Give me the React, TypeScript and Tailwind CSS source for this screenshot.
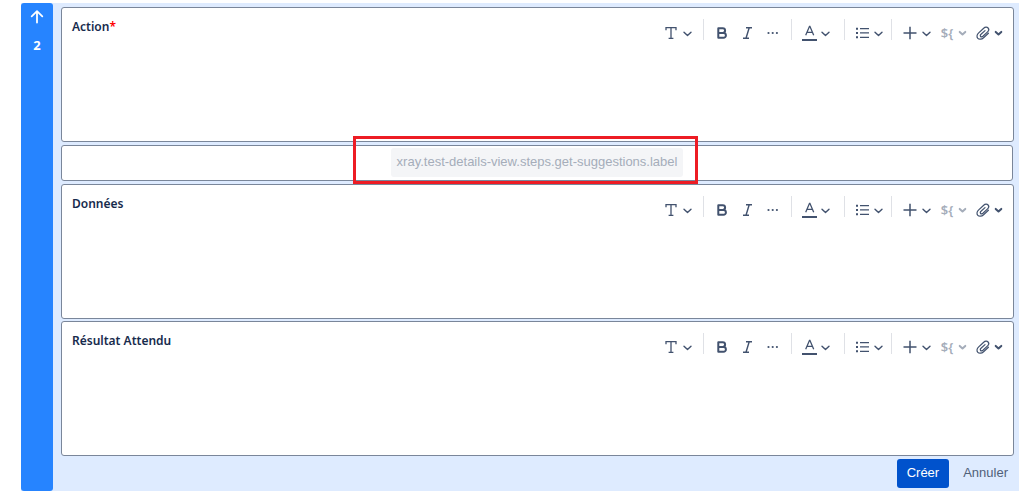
import type { ReactNode } from 'react';

function Chevron({ bold = false }: { bold?: boolean }) {
  return (
    <svg width="9" height="16" viewBox="0 0 9 16" fill="none" stroke="currentColor" strokeWidth={bold ? 2 : 1.4} strokeLinecap="round" strokeLinejoin="round" aria-hidden="true">
      <path d={bold ? 'M1.7 6.9 4.5 9.5 7.3 6.9' : 'M1 7.2 4.5 10.6 8 7.2'} />
    </svg>
  );
}

function Icon({ children, fill = false }: { children: ReactNode; fill?: boolean }) {
  return (
    <svg
      width="16"
      height="16"
      viewBox="0 0 16 16"
      fill={fill ? 'currentColor' : 'none'}
      stroke={fill ? 'none' : 'currentColor'}
      strokeWidth="1.4"
      aria-hidden="true"
    >
      {children}
    </svg>
  );
}

function ToolButton({ label, menu, boldMenu, disabled, children }: { label: string; menu?: boolean; boldMenu?: boolean; disabled?: boolean; children: ReactNode }) {
  return (
    <button type="button" aria-label={label} disabled={disabled} className="flex items-center gap-[3px] text-[#42526e] disabled:text-[#a5adba]">
      {children}
      {menu && <Chevron bold={boldMenu} />}
    </button>
  );
}

function Divider() {
  return <span className="h-[21px] w-px self-start bg-[#dfe1e6]" />;
}

function Toolbar() {
  return (
    <div role="toolbar" className="flex h-7 items-center">
      <ToolButton label="Style de texte" menu>
        <Icon>
          <path d="M2 5.2V2.7h10v2.5M7 2.7v10.6M4.6 13.3h4.8" strokeWidth="1.3" />
        </Icon>
      </ToolButton>
      <div className="ml-[11px] mr-2.5 flex self-stretch"><Divider /></div>
      <div className="flex gap-2.5">
        <ToolButton label="Gras">
          <Icon>
            <path d="M4.3 3.2h4.4a2.3 2.3 0 0 1 0 4.8H4.3zM4.3 8h5.2a2.4 2.4 0 0 1 0 4.8H4.3z" strokeWidth="2" strokeLinejoin="round" />
          </Icon>
        </ToolButton>
        <ToolButton label="Italique">
          <Icon>
            <path d="M6 2.7h6M3 13.3h6M9.2 2.7 6 13.3" />
          </Icon>
        </ToolButton>
        <ToolButton label="Plus de mise en forme">
          <Icon fill>
            <circle cx="2.5" cy="8" r="1.1" />
            <circle cx="6.7" cy="8" r="1.1" />
            <circle cx="10.9" cy="8" r="1.1" />
          </Icon>
        </ToolButton>
      </div>
      <div className="ml-[9px] mr-2.5 flex self-stretch"><Divider /></div>
      <ToolButton label="Couleur du texte" menu>
        <Icon>
          <path d="M3.7 10.3 7.5 1.3h.4l3.8 9M5 7.3h5.4" strokeWidth="1.3" />
          <path d="M0 15h15" strokeWidth="2" />
        </Icon>
      </ToolButton>
      <div className="ml-3.5 mr-2.5 flex self-stretch"><Divider /></div>
      <ToolButton label="Listes" menu>
        <Icon fill>
          <path d="M5 3h9v1.3H5zM5 7.3h9v1.3H5zM5 11.7h9V13H5zM1 2.7h2v2H1zM1 7h2v2H1zM1 11.3h2v2H1z" />
        </Icon>
      </ToolButton>
      <div className="ml-2 mr-[11px] flex self-stretch"><Divider /></div>
      <div className="flex gap-2">
        <ToolButton label="Insérer" menu>
          <Icon>
            <path d="M.5 8h13M7 1.7v12.6" strokeWidth="1.5" />
          </Icon>
        </ToolButton>
        <ToolButton label="Paramètres" menu boldMenu disabled>
          <span className="w-4 text-center font-['Noto_Sans','Open_Sans',sans-serif] text-[13px] leading-4 font-semibold">{'${'}</span>
        </ToolButton>
        <ToolButton label="Pièces jointes" menu boldMenu>
          <Icon>
            <path d="m13.4 8.2-4.8 4.5c-2 1.9-4.600 1.900-5.800.6-1.300-1.300-1.100-3.600.9-5.400l5-4.700c1.400-1.300 3.400-1.300 4.400-.2 1 1.100.8 2.700-.5 3.900L7.900 11.300c-.8.7-1.800.8-2.300.2-.6-.6-.4-1.500.4-2.200l4-3.700" strokeWidth="1.2" strokeLinecap="round" />
          </Icon>
        </ToolButton>
      </div>
    </div>
  );
}

function Field({ id, label, required }: { id: string; label: string; required?: boolean }) {
  return (
    <section className="flex h-[135px] flex-col rounded-[3px] border border-[#7a869a] bg-white">
      <div className="flex items-start justify-between pt-[11px] pr-2.5 pl-2.5">
        <label htmlFor={id} className="-mt-px font-['Noto_Sans','Open_Sans',sans-serif] text-[12px] leading-[18px] font-semibold text-[#172b4d]">
          {label}
          {required && <span className="text-[#ff0000]">*</span>}
        </label>
        <Toolbar />
      </div>
      <textarea id={id} required={required} className="min-h-0 flex-1 resize-none bg-transparent px-2.5 text-[13px] text-[#172b4d] outline-none" />
    </section>
  );
}

export default function App() {
  return (
    <main className="bg-white pt-[3px] pb-1.5 pl-[21px] font-['Liberation_Sans',Arial,sans-serif] text-[13px]">
      <div className="flex bg-[#deebff]">
        <aside className="flex w-8 shrink-0 flex-col items-center rounded-[3px] bg-[#2684ff] pt-1.5 text-white">
          <button type="button" aria-label="Déplacer vers le haut">
            <svg width="16" height="16" viewBox="0 0 16 16" fill="none" stroke="currentColor" strokeWidth="1.8" strokeLinecap="round" strokeLinejoin="round" aria-hidden="true">
              <path d="M8 13.5V2.5M2.7 7.3 8 2.2l5.3 5.1" />
            </svg>
          </button>
          <span className="mt-[11px] font-['Noto_Sans','Open_Sans',sans-serif] leading-[18px] font-bold">2</span>
        </aside>
        <form className="flex min-w-0 flex-1 flex-col gap-[3px] pt-1 pr-[5px] pb-[3px] pl-2">
          <Field id="action" label="Action" required />
          <div className="mr-px flex h-9 items-start justify-center rounded-[3px] border border-[#7a869a] bg-white pt-0.5">
            <div className="relative">
              <button type="button" disabled className="block rounded-[3px] bg-[#f4f5f7] px-1.5 pt-[3px] pb-[5px] leading-[21px] text-[#a5adba]">
                xray.test-details-view.steps.get-suggestions.label
              </button>
              <span className="pointer-events-none absolute -top-3 -right-[15px] -bottom-[7px] -left-[38px] border-3 border-[#ed1c24]" />
            </div>
          </div>
          <div className="flex flex-col gap-0.5">
            <Field id="donnees" label="Données" />
            <Field id="resultat" label="Résultat Attendu" />
          </div>
          <div className="flex justify-end gap-1">
            <button type="submit" className="rounded-[3px] bg-[#0052cc] px-2.5 pt-[3px] pb-[5px] leading-[21px] text-white">Créer</button>
            <button type="button" className="pt-[3px] pr-1.5 pb-[5px] pl-2.5 leading-[21px] text-[#505f79]">Annuler</button>
          </div>
        </form>
      </div>
    </main>
  );
}
